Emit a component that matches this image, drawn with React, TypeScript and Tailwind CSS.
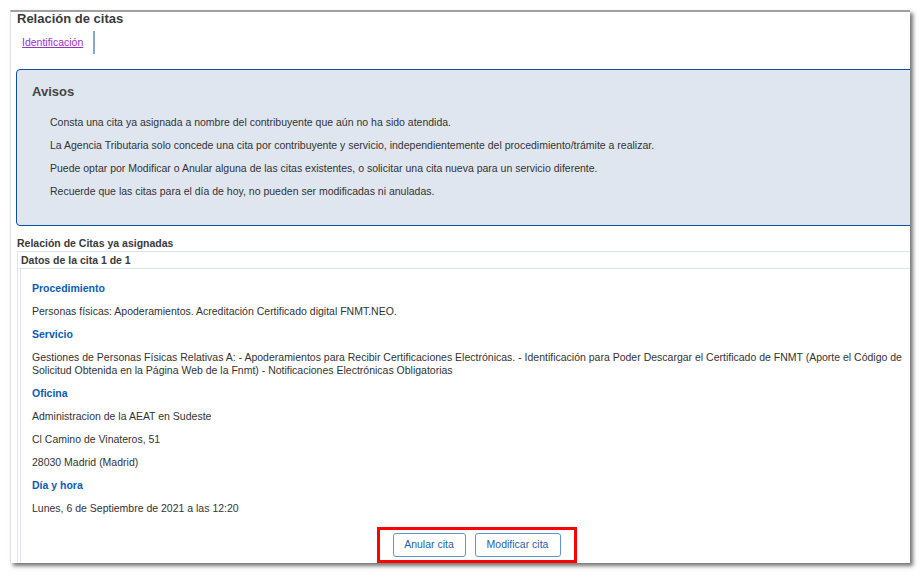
import React from 'react';

const avisos = [
  'Consta una cita ya asignada a nombre del contribuyente que aún no ha sido atendida.',
  'La Agencia Tributaria solo concede una cita por contribuyente y servicio, independientemente del procedimiento/trámite a realizar.',
  'Puede optar por Modificar o Anular alguna de las citas existentes, o solicitar una cita nueva para un servicio diferente.',
  'Recuerde que las citas para el día de hoy, no pueden ser modificadas ni anuladas.',
];

const Heading = ({ children }: { children: React.ReactNode }) => (
  <h3 className="text-[10.5px] leading-[13px] font-bold text-[#0b5cb0]">{children}</h3>
);

const Line = ({ children }: { children: React.ReactNode }) => (
  <p className="text-[10.5px] leading-[13px] text-[#333]">{children}</p>
);

const App = () => {
  return (
    <div className="min-h-screen w-full bg-white pl-[10px] pt-[10px] font-['Liberation_Sans',Arial,sans-serif]">
      {/* Captured window frame */}
      <div className="w-[900px] h-[553px] overflow-hidden bg-white border-t-2 border-t-[#a0a0a0] border-l border-l-[#e2e2e2] shadow-[3px_3px_4px_rgba(0,0,0,0.55)]">
        <div className="pl-[6px]">
          <h1 className="text-[13px] leading-[14px] font-bold text-[#3a3a3a]">Relación de citas</h1>

          {/* Tabs */}
          <div className="flex mt-[5px]">
            <div className="h-[23px] flex items-center pl-[5px] pr-[10px] border-r-2 border-r-[#8aa7cc]">
              <a href="#" className="text-[10.5px] leading-[13px] text-[#9b30cc] underline">Identificación</a>
            </div>
          </div>

          {/* Avisos */}
          <div className="ml-[-1px] mt-[15px] w-[940px] h-[157px] rounded-[4px] border-[1.5px] border-[#0d4fa6] bg-[#dfe6ef] pl-[15px] pt-[14px]">
            <h2 className="text-[13px] leading-[16px] font-bold text-[#444]">Avisos</h2>
            <div className="pl-[18px] mt-[16px] flex flex-col gap-[10px]">
              {avisos.map((t) => (
                <p key={t} className="text-[10.5px] leading-[13px] text-[#333]">{t}</p>
              ))}
            </div>
          </div>

          <h2 className="mt-[11px] text-[10.5px] leading-[13px] font-bold text-[#3a3a3a]">Relación de Citas ya asignadas</h2>

          {/* Card */}
          <div className="mt-[1px] w-[918px] border border-[#dde6f0]">
            <div className="h-[17px] flex items-center pt-[1px] pl-[3px] border-b border-b-[#dde6f0]">
              <span className="text-[10.5px] leading-[13px] font-bold text-[#3a3a3a]">Datos de la cita 1 de 1</span>
            </div>
            <div className="ml-[2px] border-l border-l-[#dde6f0] pl-[11px] pt-[13px] flex flex-col gap-[10px]">
              <Heading>Procedimiento</Heading>
              <Line>Personas físicas: Apoderamientos. Acreditación Certificado digital FNMT.NEO.</Line>
              <Heading>Servicio</Heading>
              <p className="max-w-[872px] text-[10.5px] leading-[13px] text-[#333]">
                Gestiones de Personas Físicas Relativas A: - Apoderamientos para Recibir Certificaciones Electrónicas. - Identificación para Poder Descargar el Certificado de FNMT (Aporte el Código de Solicitud Obtenida en la Página Web de la Fnmt) - Notificaciones Electrónicas Obligatorias
              </p>
              <Heading>Oficina</Heading>
              <Line>Administracion de la AEAT en Sudeste</Line>
              <Line>Cl Camino de Vinateros, 51</Line>
              <Line>28030 Madrid (Madrid)</Line>
              <Heading>Día y hora</Heading>
              <Line>Lunes, 6 de Septiembre de 2021 a las 12:20</Line>

              <div className="flex justify-center mt-[2px] pr-[13px]">
                <div className="flex gap-[9px] border-[3px] border-[#f00] px-[13px] pt-[3px] pb-[3px]">
                  <button className="h-[24px] w-[73px] rounded-[3px] border border-[#5f95d2] bg-white text-[10.5px] text-[#1f5fa6]">Anular cita</button>
                  <button className="h-[24px] w-[86px] rounded-[3px] border border-[#5f95d2] bg-white text-[10.5px] text-[#1f5fa6]">Modificar cita</button>
                </div>
              </div>
            </div>
          </div>
        </div>
      </div>
    </div>
  );
};

export default App;
